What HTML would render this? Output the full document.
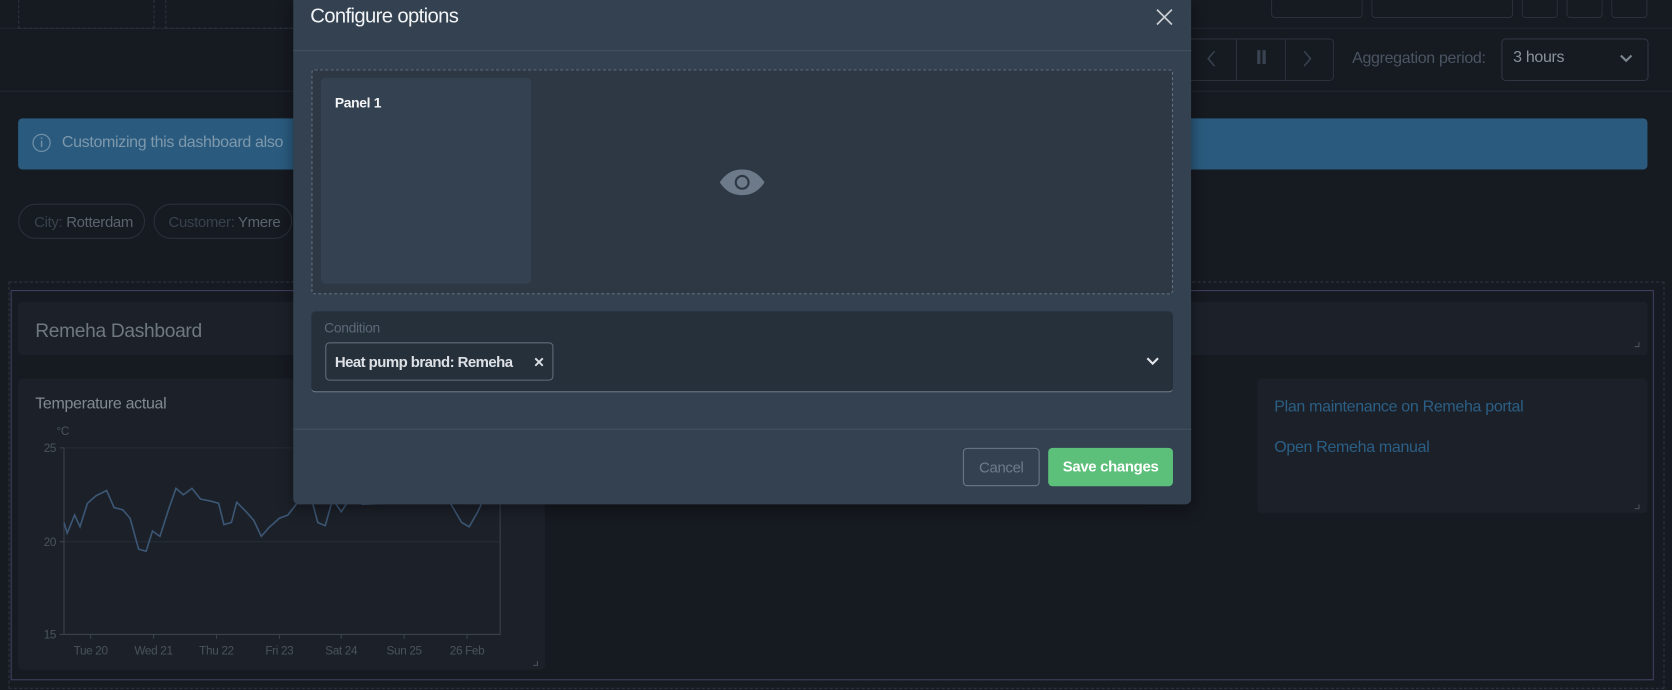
<!DOCTYPE html>
<html><head><meta charset="utf-8"><style>
*{box-sizing:border-box;margin:0;padding:0}
html,body{width:1672px;height:690px;overflow:hidden;background:#161a21;font-family:"Liberation Sans",sans-serif}
#s{position:absolute;left:0;top:0;width:1568px;height:647px;transform:scale(1.066327);transform-origin:0 0}
.a{position:absolute;white-space:nowrap;letter-spacing:-0.3px}
.t{color:#4b5866;font-size:14px}
</style></head><body><div id="s">
<div class="a" style="left:0;top:26px;width:1568px;height:1px;background:#222831"></div>
<div class="a" style="left:0;top:85px;width:1568px;height:1px;background:#222831"></div>
<div class="a" style="left:17px;top:0;width:128px;height:27px;border:1px dashed #2d343e;border-top:none"></div>
<div class="a" style="left:155px;top:0;width:130px;height:27px;border:1px dashed #2d343e;border-top:none"></div>
<div class="a" style="left:1192px;top:0;width:86px;height:17px;border:1px solid #2a313b;border-top:none;border-radius:0 0 4px 4px"></div>
<div class="a" style="left:1286px;top:0;width:133px;height:17px;border:1px solid #2a313b;border-top:none;border-radius:0 0 4px 4px"></div>
<div class="a" style="left:1427px;top:0;width:34px;height:17px;border:1px solid #2a313b;border-top:none;border-radius:0 0 4px 4px"></div>
<div class="a" style="left:1469px;top:0;width:34px;height:17px;border:1px solid #2a313b;border-top:none;border-radius:0 0 4px 4px"></div>
<div class="a" style="left:1511px;top:0;width:34px;height:17px;border:1px solid #2a313b;border-top:none;border-radius:0 0 4px 4px"></div>
<div class="a" style="left:1100px;top:36px;width:151px;height:40px;border:1px solid #2a313b;border-radius:4px"></div>
<div class="a" style="left:1159px;top:36px;width:1px;height:40px;background:#2a313b"></div>
<div class="a" style="left:1205px;top:36px;width:1px;height:40px;background:#2a313b"></div>
<svg class="a" style="left:1130px;top:46px" width="12" height="18"><path d="M9 2L3 9l6 7" stroke="#3a4450" stroke-width="1.4" fill="none"/></svg>
<div class="a" style="left:1179px;top:47px;width:3px;height:13px;background:#3a4450"></div>
<div class="a" style="left:1184px;top:47px;width:3px;height:13px;background:#3a4450"></div>
<svg class="a" style="left:1220px;top:46px" width="12" height="18"><path d="M3 2l6 7-6 7" stroke="#3a4450" stroke-width="1.4" fill="none"/></svg>
<div class="a t" style="left:1268px;top:46px;font-size:15px;color:#4b5563">Aggregation period:</div>
<div class="a" style="left:1408px;top:36px;width:138px;height:40px;border:1px solid #2f3742;border-radius:4px"></div>
<div class="a" style="left:1419px;top:45px;font-size:15px;color:#8a939c">3 hours</div>
<svg class="a" style="left:1518px;top:50px" width="14" height="10"><path d="M2 2l5 5 5-5" stroke="#7d8790" stroke-width="2" fill="none"/></svg>
<div class="a" style="left:17px;top:111px;width:1528px;height:48px;background:#2a5b7e;border-radius:4px"></div>
<svg class="a" style="left:29px;top:124px" width="20" height="20"><circle cx="10" cy="10" r="8" stroke="#6e8ea6" stroke-width="1.2" fill="none"/><path d="M10 8v6M10 5v1.5" stroke="#6e8ea6" stroke-width="1.4"/></svg>
<div class="a" style="left:58px;top:125px;font-size:15px;color:#7e98ac">Customizing this dashboard also</div>
<div class="a" style="left:17px;top:191px;width:119px;height:33px;border:1px solid #2a313a;border-radius:17px;padding:8px 0 0 14px;font-size:14px;color:#39424c">City: <span style="color:#5b646e">Rotterdam</span></div>
<div class="a" style="left:144px;top:191px;width:130px;height:33px;border:1px solid #2a313a;border-radius:17px;padding:8px 0 0 13px;font-size:14px;color:#39424c">Customer: <span style="color:#5b646e">Ymere</span></div>
<div class="a" style="left:8px;top:264px;width:1553px;height:382px;border:1px dashed #2e3540"></div>
<div class="a" style="left:10px;top:272px;width:1541px;height:366px;border:1px solid #433f62"></div>
<div class="a" style="left:17px;top:283px;width:1528px;height:50px;background:#1c2129;border-radius:4px"></div>
<div class="a" style="left:33px;top:300px;font-size:18px;color:#6f7881">Remeha Dashboard</div>
<div class="a" style="left:17px;top:355px;width:494px;height:273px;background:#1c2129;border-radius:4px"></div>
<div class="a" style="left:33px;top:370px;font-size:15px;color:#818a92">Temperature actual</div>
<div class="a" style="left:1179px;top:355px;width:366px;height:126px;background:#1c2129;border-radius:4px"></div>
<div class="a" style="left:1195px;top:373px;font-size:15px;color:#2b5f85">Plan maintenance on Remeha portal</div>
<div class="a" style="left:1195px;top:411px;font-size:15px;color:#2b5f85">Open Remeha manual</div>
<svg class="a" style="left:0;top:0" width="1568" height="647">
<line x1="60" y1="420" x2="469" y2="420" stroke="#262c35"/>
<line x1="60" y1="508" x2="469" y2="508" stroke="#262c35"/>
<path d="M60 420V595H469V420" stroke="#3a424d" fill="none"/>
<path d="M56 420h4M56 508h4M56 595h4M85 595v4M144 595v4M203 595v4M262 595v4M320 595v4M379 595v4M438 595v4" stroke="#3a424d"/>
<g font-family="Liberation Sans" font-size="11" fill="#4a535d">
<text x="53" y="408">°C</text><text x="41" y="424">25</text><text x="41" y="512">20</text><text x="41" y="599">15</text>
<text x="85" y="614" text-anchor="middle">Tue 20</text><text x="144" y="614" text-anchor="middle">Wed 21</text><text x="203" y="614" text-anchor="middle">Thu 22</text><text x="262" y="614" text-anchor="middle">Fri 23</text><text x="320" y="614" text-anchor="middle">Sat 24</text><text x="379" y="614" text-anchor="middle">Sun 25</text><text x="438" y="614" text-anchor="middle">26 Feb</text>
</g>
<path d="M60 490L63 500 70 483 75 494 82 472 90 465 100 460 107 476 115 478 122 486 130 515 137 517 143 498 150 503 158 478 165 458 172 464 180 458 188 468 198 470 205 472 210 492 217 490 222 471 230 479 238 488 245 503 252 495 262 486 270 483 280 470 290 460 298 490 305 493 312 468 320 480 328 468 340 473 360 472 380 470 400 470 420 468 433 490 440 494 448 480 455 465" stroke="#3c5775" stroke-width="1.5" fill="none"/>
<path d="M504 620v4h-4M1537 321v4h-4M1537 473v4h-4" stroke="#4a525c" fill="none"/>
</svg>
<div class="a" style="left:275px;top:0;width:842px;height:473px;background:#334150;border-radius:0 0 5px 5px;box-shadow:0 4px 14px rgba(0,0,0,.4)"></div>
<div class="a" style="left:275px;top:47px;width:842px;height:1px;background:#435161"></div>
<div class="a" style="left:291px;top:5px;font-size:19px;color:#f1f3f5;letter-spacing:-0.6px">Configure options</div>
<svg class="a" style="left:1083px;top:7px" width="18" height="18"><path d="M2 2l14 14M16 2L2 16" stroke="#c9ced3" stroke-width="1.6"/></svg>
<div class="a" style="left:292px;top:65px;width:808px;height:211px;border:1px dashed #667584;background:#2d3844;border-radius:3px"></div>
<div class="a" style="left:301px;top:73px;width:197px;height:193px;background:#344150;border-radius:4px"></div>
<div class="a" style="left:314px;top:89px;font-size:13px;font-weight:bold;color:#f3f4f6">Panel 1</div>
<svg class="a" style="left:674px;top:158px" width="44" height="26"><path d="M1 13C7 4 14 1 22 1s15 3 21 12c-6 9-13 12-21 12S7 22 1 13z" fill="#6c7a89"/><circle cx="22" cy="13" r="6" fill="none" stroke="#2d3844" stroke-width="2"/></svg>
<div class="a" style="left:292px;top:292px;width:808px;height:76px;background:#26303b;border-radius:4px;border-bottom:1px solid #7a8896"></div>
<div class="a" style="left:304px;top:300px;font-size:13px;color:#5b6876">Condition</div>
<div class="a" style="left:305px;top:321px;width:214px;height:36px;border:1px solid #5f6c79;border-radius:4px"></div>
<div class="a" style="left:314px;top:331px;font-size:14px;font-weight:bold;color:#dde1e5;letter-spacing:-0.5px">Heat pump brand: Remeha</div>
<svg class="a" style="left:501px;top:335px" width="9" height="9"><path d="M1 1l7 7M8 1L1 8" stroke="#dde1e5" stroke-width="1.8"/></svg>
<svg class="a" style="left:1074px;top:334px" width="14" height="10"><path d="M2 2l5 5 5-5" stroke="#e3e6e9" stroke-width="2" fill="none"/></svg>
<div class="a" style="left:275px;top:402px;width:842px;height:1px;background:#435161"></div>
<div class="a" style="left:903px;top:420px;width:72px;height:36px;border:1px solid #6b7886;border-radius:4px;text-align:center;padding-top:9px;font-size:14px;color:#6f7c8a">Cancel</div>
<div class="a" style="left:983px;top:420px;width:117px;height:36px;background:#5cbf7a;border-radius:4px;text-align:center;padding-top:9px;font-size:14px;font-weight:bold;color:#fff">Save changes</div>
</div></body></html>
